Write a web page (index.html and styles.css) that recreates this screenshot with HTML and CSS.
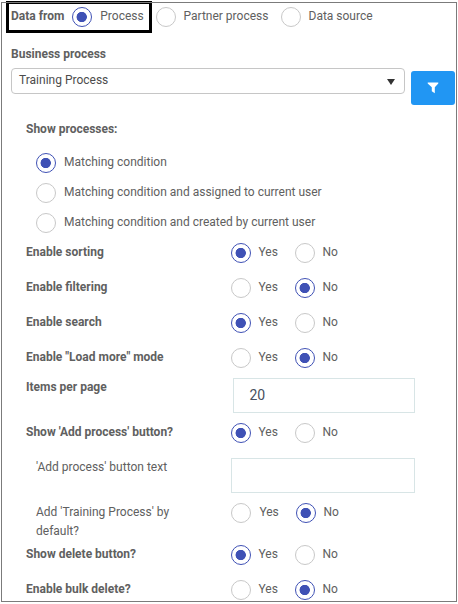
FILE: index.html
```html
<!DOCTYPE html>
<html lang="en">
<head>
<meta charset="utf-8">
<title>Data settings</title>
<link rel="stylesheet" href="styles.css">
</head>
<body>
<main class="panel">
  <div class="source">
    <div class="source-active"><b class="source-label">Data from</b><span class="option"><i class="radio on"></i><span>Process</span></span></div>
    <span class="option partner"><i class="radio"></i><span>Partner process</span></span>
    <span class="option datasource"><i class="radio"></i><span>Data source</span></span>
  </div>
  <b class="title">Business process</b>
  <div class="picker">
    <div class="select"><span>Training Process</span><i class="caret"></i></div>
    <button class="filter" aria-label="Filter"><svg width="12" height="12" viewBox="0 0 12 12"><path d="M.7.5h10.6v1L7.8 5.3v5.9L4.8 9.2V5.3L.7 1.5z" fill="#fff"/></svg></button>
  </div>
  <b class="subtitle">Show processes:</b>
  <div class="conditions">
    <span class="option"><i class="radio on"></i><span>Matching condition</span></span>
    <span class="option"><i class="radio"></i><span>Matching condition and assigned to current user</span></span>
    <span class="option"><i class="radio"></i><span>Matching condition and created by current user</span></span>
  </div>
  <div class="settings">
    <div class="row"><b class="label">Enable sorting</b><span class="option"><i class="radio on"></i><span>Yes</span></span><span class="option"><i class="radio"></i><span>No</span></span></div>
    <div class="row"><b class="label">Enable filtering</b><span class="option"><i class="radio"></i><span>Yes</span></span><span class="option"><i class="radio on"></i><span>No</span></span></div>
    <div class="row"><b class="label">Enable search</b><span class="option"><i class="radio on"></i><span>Yes</span></span><span class="option"><i class="radio"></i><span>No</span></span></div>
    <div class="row short"><b class="label">Enable "Load more" mode</b><span class="option"><i class="radio"></i><span>Yes</span></span><span class="option"><i class="radio on"></i><span>No</span></span></div>
    <div class="row tall"><b class="label">Items per page</b><div class="field count">20</div></div>
    <div class="row"><b class="label">Show 'Add process' button?</b><span class="option"><i class="radio on"></i><span>Yes</span></span><span class="option"><i class="radio"></i><span>No</span></span></div>
    <div class="row tall"><span class="label nested">'Add process' button text</span><div class="field"></div></div>
    <div class="row wrap"><span class="label nested">Add 'Training Process' by default?</span><span class="option"><i class="radio"></i><span>Yes</span></span><span class="option"><i class="radio on"></i><span>No</span></span></div>
    <div class="row"><b class="label">Show delete button?</b><span class="option"><i class="radio on"></i><span>Yes</span></span><span class="option"><i class="radio"></i><span>No</span></span></div>
    <div class="row last"><b class="label">Enable bulk delete?</b><span class="option"><i class="radio"></i><span>Yes</span></span><span class="option"><i class="radio on"></i><span>No</span></span></div>
  </div>
</main>
</body>
</html>
```
FILE: styles.css
```css
* { box-sizing: border-box; }
body { margin: 0; background: #fff; color: #606060; font: 12px/18px Roboto, "Liberation Sans", sans-serif; overflow: hidden; }
b { font-weight: 700; }
.panel { position: relative; width: 456px; height: 600px; margin: 2px 0 0 1px; border: 1px solid #7b7b7b; display: flex; flex-direction: column; }
/* keeps the frame line visible over the highlighted source */
.panel::before { content: ""; position: absolute; top: -1px; left: 0; right: 0; height: 1px; background: #7b7b7b; }
.option { display: flex; gap: 7.5px; white-space: nowrap; height: 20px; }
.radio { flex: none; width: 20px; height: 20px; border: 1px solid #c8c8c8; border-radius: 50%; background: #fff; }
.radio.on { border-color: #3f51b5; background: radial-gradient(circle at 8.7px 9px, #3f51b5 4.8px, #fff 5.5px); }
.source { display: flex; height: 32px; margin-top: -2px; padding-left: 4px; flex: none; }
.source-active { display: flex; width: 146px; height: 32px; padding: 3px 0 0 2px; border: 3px solid #000; flex: none; }
.source-active .option { gap: 8.3px; }
.source-label { width: 61px; white-space: nowrap; }
.partner { margin: 6px 0 0 4px; width: 125px; }
.datasource { margin-top: 6px; }
.title { margin: 12px 0 0 9px; }
.picker { display: flex; gap: 6px; margin: 5px 0 0 9px; height: 37px; }
.select { display: flex; justify-content: space-between; width: 394px; height: 26px; padding: 2px 9px 0 7px; border: 1px solid #c6c6c6; border-radius: 4px; color: #4c4c4c; }
.caret { width: 0; height: 0; margin-top: 8px; border: 4px solid transparent; border-top: 6px solid #333; border-bottom: 0; }
.filter { display: flex; align-items: center; justify-content: center; width: 44px; height: 34px; margin-top: 3px; padding: 0 1px 0 0; border: 0; border-radius: 3px; background: #2196f3; }
.subtitle { margin: 15px 0 0 24px; }
.conditions { display: flex; flex-direction: column; gap: 10px; margin: 15px 0 0 34px; }
.conditions .option { gap: 8px; }
.settings { margin: 10px 0 0 24px; }
.row { display: flex; height: 35px; }
.row .option { width: 64px; }
.label { width: 205px; flex: none; }
.nested { padding: 0 50px 0 10px; line-height: 19px; }
.short { height: 30px; }
.tall { height: 45px; }
.wrap { height: 42px; }
.wrap .option { gap: 8.4px; }
.wrap .option:last-child { margin-left: 1px; gap: 7.5px; }
.last { height: 20px; }
.field { width: 184px; height: 35px; border: 1px solid #d8e5e6; }
.count { width: 182px; margin-left: 2px; padding-left: 15.5px; font-size: 14px; line-height: 33px; color: #485060; }
```
